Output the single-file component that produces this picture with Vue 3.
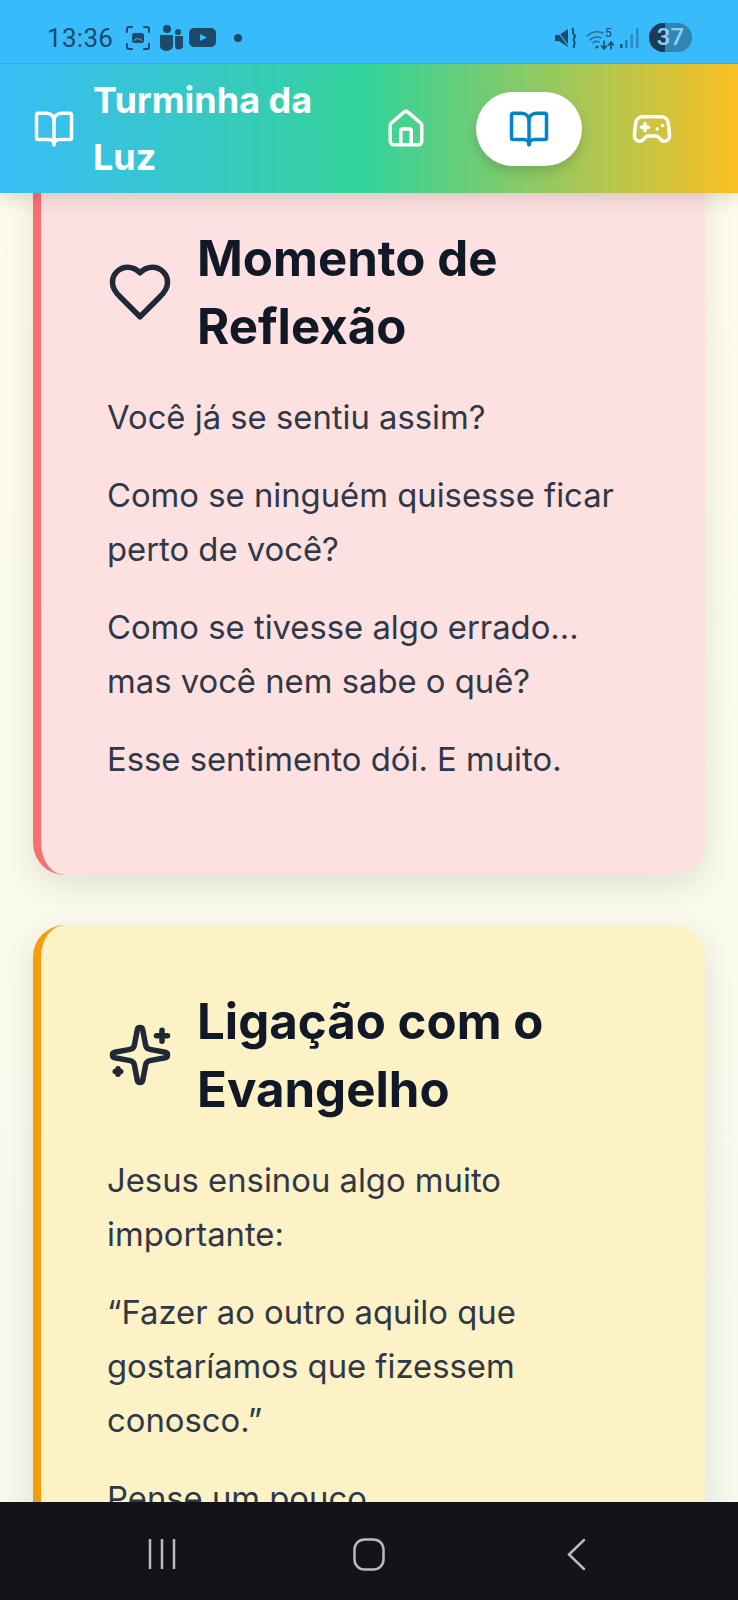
<template>
  <div class="phone">
    <div class="status">
      <div class="status-left">
        <span class="clock">13:36</span>
        <svg class="st-ic" width="26" height="26" viewBox="0 0 26 26" fill="none" stroke="#1d4a68" stroke-width="2" stroke-linecap="round">
          <path d="M2 7V4a2 2 0 0 1 2-2h3M19 2h3a2 2 0 0 1 2 2v3M24 19v3a2 2 0 0 1-2 2h-3M7 24H4a2 2 0 0 1-2-2v-3" />
          <rect x="7" y="8" width="12" height="10" rx="2.5" fill="#1d4a68" stroke="none" />
          <path d="M9 16l2.500-3 2 2 1.500-1.500 2 2.500" stroke="#38bbfb" stroke-width="1" />
        </svg>
        <svg class="st-ic teams" width="24" height="27" viewBox="0 0 24 27" fill="#1d4a68">
          <circle cx="8" cy="5" r="4" />
          <circle cx="19" cy="8" r="3" />
          <path d="M1 11h13v11a6.500 5 0 0 1-13 0z" />
          <path d="M16 12h8v9a4 4 0 0 1-8 1z" />
        </svg>
        <svg class="yt" width="27" height="20" viewBox="0 0 27 20">
          <rect width="27" height="19" rx="5" fill="#1d4a68" />
          <path d="M11 6l7 3.500-7 3.500z" fill="#38bbfb" />
        </svg>
        <span class="dot"></span>
      </div>
      <div class="status-right">
        <svg class="mute" width="22" height="22" viewBox="0 0 22 22" fill="#1d4a68">
          <path d="M1 8h4l9-6v18L5 14H1z" />
          <path d="M1 1l15 20" stroke="#38bbfb" stroke-width="1.200" />
          <path d="M18 1c3 2-1 4 2 6.500s-2 4 0 6.500 -1 3 0 7" stroke="#1d4a68" stroke-width="2" fill="none" />
        </svg>
        <svg class="wifi" width="28" height="25" viewBox="0 -3 28 25" fill="none" stroke="#2a6f97" stroke-width="1.600" stroke-linecap="round">
          <path d="M1 8a15 15 0 0 1 16-3M4 12a10 10 0 0 1 11-2M7 15a5 5 0 0 1 6-1" />
          <circle cx="11" cy="19" r="1.500" fill="#1d4a68" stroke="none" />
          <path d="M18 13v8M15.500 18l2.500 3 2.500-3M25 21v-7M22.500 17l2.500-3 2.500 3" stroke="#1d4a68" />
          <text x="19" y="9" class="wifi-five">5</text>
        </svg>
        <svg class="bars" width="19" height="22" viewBox="0 0 19 22">
          <rect x="0" y="17" width="2.500" height="4" fill="#1d4a68" />
          <rect x="5" y="13" width="2.500" height="8" fill="#2a7cab" />
          <rect x="10.500" y="7" width="2.500" height="14" fill="#2a8cc0" />
          <rect x="16" y="1" width="2.500" height="20" fill="#2a8cc0" />
        </svg>
        <div class="battery"><span class="battery-fill"></span><span class="battery-num">37</span></div>
      </div>
    </div>

    <header class="topbar">
      <div class="brand">
        <svg class="ic-42" viewBox="0 0 24 24" fill="none" stroke="currentColor" stroke-width="2" stroke-linecap="round" stroke-linejoin="round">
          <path d="M12 7v14" />
          <path d="M3 18a1 1 0 0 1-1-1V4a1 1 0 0 1 1-1h5a4 4 0 0 1 4 4 4 4 0 0 1 4-4h5a1 1 0 0 1 1 1v13a1 1 0 0 1-1 1h-6a3 3 0 0 0-3 3 3 3 0 0 0-3-3z" />
        </svg>
        <span class="brand-name">Turminha da Luz</span>
      </div>
      <nav class="tabs">
        <button class="tab">
          <svg class="ic-42" viewBox="0 0 24 24" fill="none" stroke="currentColor" stroke-width="2" stroke-linecap="round" stroke-linejoin="round">
            <path d="M15 21v-8a1 1 0 0 0-1-1h-4a1 1 0 0 0-1 1v8" />
            <path d="M3 10a2 2 0 0 1 .709-1.528l7-5.999a2 2 0 0 1 2.582 0l7 5.999A2 2 0 0 1 21 10v9a2 2 0 0 1-2 2H5a2 2 0 0 1-2-2z" />
          </svg>
        </button>
        <button class="tab active">
          <svg class="ic-42" viewBox="0 0 24 24" fill="none" stroke="currentColor" stroke-width="2" stroke-linecap="round" stroke-linejoin="round">
            <path d="M12 7v14" />
            <path d="M3 18a1 1 0 0 1-1-1V4a1 1 0 0 1 1-1h5a4 4 0 0 1 4 4 4 4 0 0 1 4-4h5a1 1 0 0 1 1 1v13a1 1 0 0 1-1 1h-6a3 3 0 0 0-3 3 3 3 0 0 0-3-3z" />
          </svg>
        </button>
        <button class="tab">
          <svg class="ic-42" viewBox="0 0 24 24" fill="none" stroke="currentColor" stroke-width="2" stroke-linecap="round" stroke-linejoin="round">
            <line x1="6" x2="10" y1="11" y2="11" />
            <line x1="8" x2="8" y1="9" y2="13" />
            <line x1="15" x2="15.010" y1="12" y2="12" />
            <line x1="18" x2="18.010" y1="10" y2="10" />
            <path d="M17.320 5H6.680a4 4 0 0 0-3.978 3.590c-.006.052-.01.101-.017.152C2.604 9.416 2 14.456 2 16a3 3 0 0 0 3 3c1 0 1.500-.5 2-1l1.414-1.414A2 2 0 0 1 9.828 16h4.344a2 2 0 0 1 1.414.586L17 18c.5.5 1 1 2 1a3 3 0 0 0 3-3c0-1.545-.604-6.584-.685-7.258-.007-.05-.011-.1-.017-.151A4 4 0 0 0 17.320 5z" />
          </svg>
        </button>
      </nav>
    </header>

    <main class="page">
      <div class="scroll">
        <section v-for="card in cards" :key="card.title" class="card" :class="card.tone">
          <div class="card-head">
            <svg class="ic-66" viewBox="0 0 24 24" fill="none" stroke="currentColor" stroke-width="2" stroke-linecap="round" stroke-linejoin="round">
              <path v-for="d in card.icon" :key="d" :d="d" />
            </svg>
            <h2>{{ card.title }}</h2>
          </div>
          <p v-for="line in card.lines" :key="line">{{ line }}</p>
        </section>
      </div>
    </main>

    <div class="navbar">
      <svg width="28" height="32" viewBox="0 0 28 32" stroke="#b9babd" stroke-width="2.500" fill="none">
        <path d="M2 1v30M14 1v30M26 1v30" />
      </svg>
      <svg width="32" height="33" viewBox="0 0 32 33" stroke="#b9babd" stroke-width="2.500" fill="none">
        <rect x="1.500" y="1.500" width="29" height="30" rx="10" />
      </svg>
      <svg width="19" height="33" viewBox="0 0 19 33" stroke="#b9babd" stroke-width="2.500" fill="none" stroke-linecap="round">
        <path d="M17 2L2 16.500 17 31" />
      </svg>
    </div>
  </div>
</template>

<script setup>
const heart = ['M19 14c1.490-1.460 3-3.210 3-5.500A5.500 5.500 0 0 0 16.500 3c-1.760 0-3 .5-4.500 2-1.500-1.500-2.740-2-4.500-2A5.500 5.500 0 0 0 2 8.500c0 2.300 1.500 4.050 3 5.500l7 7Z']
const sparkles = [
  'M11.017 2.814a1 1 0 0 1 1.966 0l1.051 5.558a2 2 0 0 0 1.594 1.594l5.558 1.051a1 1 0 0 1 0 1.966l-5.558 1.051a2 2 0 0 0-1.594 1.594l-1.051 5.558a1 1 0 0 1-1.966 0l-1.051-5.558a2 2 0 0 0-1.594-1.594l-5.558-1.051a1 1 0 0 1 0-1.966l5.558-1.051a2 2 0 0 0 1.594-1.594z',
  'M20 3v4',
  'M22 5h-4',
  'M4 17v2',
  'M5 18H3'
]

const cards = [
  {
    title: 'Momento de Reflexão',
    tone: 'pink',
    icon: heart,
    lines: [
      'Você já se sentiu assim?',
      'Como se ninguém quisesse ficar perto de você?',
      'Como se tivesse algo errado... mas você nem sabe o quê?',
      'Esse sentimento dói. E muito.'
    ]
  },
  {
    title: 'Ligação com o Evangelho',
    tone: 'yellow',
    icon: sparkles,
    lines: [
      'Jesus ensinou algo muito importante:',
      '“Fazer ao outro aquilo que gostaríamos que fizessem conosco.”',
      'Pense um pouco.'
    ]
  }
]
</script>

<style scoped>
.phone {
  width: 738px;
  height: 1600px;
  display: flex;
  flex-direction: column;
  overflow: hidden;
  font-family: Inter, "Liberation Sans", sans-serif;
  background: linear-gradient(180deg, #fffbeb, #f3f9ec);
}

.status {
  flex: none;
  background: #38bbfb;
  display: flex;
  align-items: center;
  justify-content: space-between;
  padding: 12px 46px 0 47px;
  box-sizing: border-box;
  color: #1d4a68;
  border-bottom: 1px solid #35a9dc;
  height: 64px;
  position: relative;
  z-index: 3;
}
.status-left,
.status-right {
  display: flex;
  align-items: center;
}
.clock {
  font-family: Roboto, sans-serif;
  font-size: 26px;
  margin-right: 12px;
  letter-spacing: 0.3px;
}
.st-ic { margin-right: 8px; }
.teams { margin-right: 6px; }
.dot {
  width: 8px;
  height: 8px;
  border-radius: 50%;
  background: #1d4a68;
  margin-left: 18px;
}
.wifi { margin: 0 6px 0 10px; }
.battery {
  width: 43px;
  height: 29px;
  border-radius: 15px;
  background: #2f85b4;
  overflow: hidden;
  position: relative;
  margin-left: 10px;
}
.wifi-five {
  font: 12px Roboto, sans-serif;
  fill: #1d4a68;
  stroke: none;
}
.battery-fill {
  position: absolute;
  left: 0;
  top: 0;
  bottom: 0;
  width: 16px;
  background: #1b3c55;
}
.battery-num {
  position: absolute;
  inset: 0;
  text-align: center;
  font: 500 24px/29px Roboto, sans-serif;
  color: #8fd0ee;
}

.topbar {
  height: 129px;
  flex: none;
  display: flex;
  align-items: center;
  justify-content: space-between;
  padding: 0 33px;
  background: linear-gradient(90deg, #38bdf8, #34d399 50%, #fbbf24);
  box-shadow: 0 4px 20px rgba(0, 0, 0, 0.15);
  position: relative;
  z-index: 2;
  color: #fff;
}
.brand {
  display: flex;
  align-items: center;
  gap: 18px;
}
.brand-name {
  width: 240px;
  font-size: 36px;
  font-weight: 700;
  line-height: 57px;
}
.ic-42 {
  width: 42px;
  height: 42px;
  flex: none;
  display: block;
}
.tabs {
  display: flex;
  gap: 17px;
}
.tab {
  width: 106px;
  height: 74px;
  border: 0;
  padding: 0;
  border-radius: 37px;
  background: transparent;
  color: #fff;
  display: flex;
  align-items: center;
  justify-content: center;
}
.tab.active {
  background: #fff;
  color: #0284c7;
  box-shadow: 0 6px 12px rgba(0, 0, 0, 0.15);
}

.page {
  flex: 1;
  min-height: 0;
  overflow: hidden;
}
.scroll {
  margin-top: -31px;
  padding: 0 33px;
}
.card {
  border-left: 8px solid;
  border-radius: 32px;
  padding: 62px 64px 65px 66px;
  margin-bottom: 50px;
  box-shadow: 0 10px 30px rgba(0, 0, 0, 0.1);
  color: #2f3848;
}
.pink {
  background: #fde1e0;
  border-color: #f87171;
}
.yellow {
  background: #fdf2c6;
  border-color: #f59e0b;
}
.card-head {
  display: flex;
  align-items: center;
  gap: 24px;
  margin-bottom: 30px;
  color: #1f2937;
}
.ic-66 {
  width: 66px;
  height: 66px;
  flex: none;
}
h2 {
  margin: 0;
  font-size: 49.200px;
  line-height: 68px;
  font-weight: 700;
  color: #111827;
}
p {
  margin: 0 0 24px;
  font-size: 32.800px;
  line-height: 54px;
}

.navbar {
  height: 98px;
  flex: none;
  box-sizing: border-box;
  background: #121419;
  position: relative;
  z-index: 2;
  display: grid;
  grid-template-columns: repeat(3, 207px);
  justify-content: center;
  justify-items: center;
  align-items: center;
  padding-top: 6px;
}
</style>
